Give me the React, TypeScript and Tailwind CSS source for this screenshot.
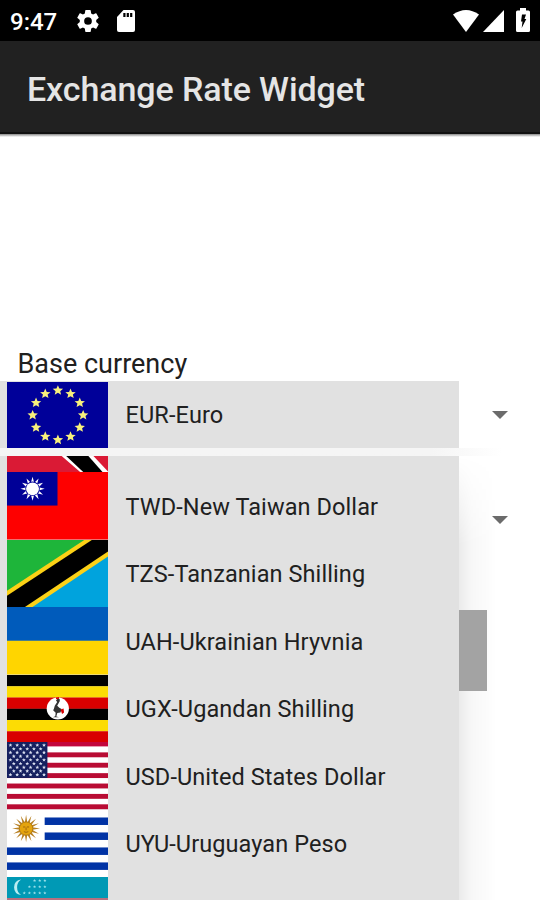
import React from "react";

const star = (cx: number, cy: number, r: number) =>
  Array.from({ length: 10 }, (_, i) => {
    const a = (i * Math.PI) / 5 - Math.PI / 2;
    const d = i % 2 ? r * 0.45 : r;
    return `${(cx + d * Math.cos(a)).toFixed(2)},${(cy + d * Math.sin(a)).toFixed(2)}`;
  }).join(" ");

const burst = (cx: number, cy: number, outer: number, inner: number, n: number) =>
  Array.from({ length: n * 2 }, (_, i) => {
    const a = (i * Math.PI) / n - Math.PI / 2;
    const d = i % 2 ? inner : outer;
    return `${(cx + d * Math.cos(a)).toFixed(2)},${(cy + d * Math.sin(a)).toFixed(2)}`;
  }).join(" ");

function Flag({ children }: { children: React.ReactNode }) {
  return (
    <svg viewBox="0 0 100 67.6" preserveAspectRatio="none" className="block h-full w-[101px] shrink-0">
      {children}
    </svg>
  );
}

const EU = () => (
  <Flag>
    <rect width="100" height="67.6" fill="#000099" />
    {Array.from({ length: 12 }, (_, i) => {
      const a = (i * Math.PI) / 6;
      return <polygon key={i} points={star(50.4 + 25 * Math.sin(a), 34 - 25.3 * Math.cos(a), 5.4)} fill="#f8f17c" />;
    })}
  </Flag>
);

const Trinidad = () => (
  <Flag>
    <rect width="100" height="67.6" fill="#da1a35" />
    <path d="M54 51H85.5L101 67.6H73Z" fill="#fff" />
    <path d="M58.5 51H80.5L95 67.6H76Z" fill="#000" />
  </Flag>
);

const Taiwan = () => (
  <Flag>
    <rect width="100" height="67.6" fill="#fe0000" />
    <rect width="50" height="33.6" fill="#000097" />
    <polygon points={burst(25.3, 16.8, 12, 6.3, 12)} fill="#fff" />
    <circle cx="25.3" cy="16.8" r="7.2" fill="#000097" />
    <circle cx="25.3" cy="16.8" r="6.4" fill="#fff" />
  </Flag>
);

const Tanzania = () => (
  <Flag>
    <rect width="100" height="67.6" fill="#00a3dd" />
    <path d="M0 0H100L0 67.6Z" fill="#1eb53a" />
    <path d="M0 50.8L76.5 0H100V16.5L24.5 67.6H0Z" fill="#fcd116" />
    <path d="M0 55.8L84 0H100V11.5L17 67.6H0Z" fill="#000" />
  </Flag>
);

const Ukraine = () => (
  <Flag>
    <rect width="100" height="34" fill="#005bbb" />
    <rect y="33.8" width="100" height="33.8" fill="#ffd500" />
  </Flag>
);

const Uganda = () => (
  <Flag>
    {["#000", "#fcdc04", "#d90000", "#000", "#fcdc04", "#d90000"].map((c, i) => (
      <rect key={i} y={i * 11.27} width="100" height="11.4" fill={c} />
    ))}
    <circle cx="50.3" cy="33.6" r="11" fill="#fff" />
    <path
      d="M48.5 25.5l2-2.2q2.300.2 1.700 3l-2.500 4.500q2 2.200 4.300 3.200l-1 3.500-3.200.5-1 3.500 2.700.8h-6l2.300-1 .4-3.600-2.500-2.500q.8-1 1.600-4.400l2.400-3.800z"
      fill="#333"
    />
    <path d="M48.5 22.5l3-.5v1.800l-3 .5zM53 34.5l3-1 .5 4-2 1.5z" fill="#d90000" />
  </Flag>
);

const USA = () => (
  <Flag>
    <rect width="100" height="67.6" fill="#fff" />
    {Array.from({ length: 7 }, (_, i) => (
      <rect
        key={i}
        y={i * 10.4}
        width="100"
        height={i === 0 ? 4.4 : 4.9}
        fill={i === 0 ? "#c3063c" : "#b90c34"}
      />
    ))}
    <rect width="40" height="36" fill="#15205f" />
    {Array.from({ length: 9 }, (_, r) =>
      Array.from({ length: r % 2 ? 5 : 6 }, (_, c) => (
        <polygon
          key={`${r}-${c}`}
          points={star(3.4 + c * 6.65 + (r % 2 ? 3.32 : 0), 3.2 + r * 3.7, 2)}
          fill="#d9dff0"
        />
      )),
    )}
  </Flag>
);

const Uruguay = () => (
  <Flag>
    <rect width="100" height="67.6" fill="#fff" />
    <rect x="37.3" y="7.5" width="62.7" height="7.5" fill="#0133a5" />
    <rect x="37.3" y="22.5" width="62.7" height="7.5" fill="#0133a5" />
    <rect y="37.5" width="100" height="7.5" fill="#0133a5" />
    <rect y="52.5" width="100" height="7.5" fill="#0133a5" />
    <polygon points={burst(18.9, 18.6, 13.8, 6.2, 16)} fill="#b98226" />
    <circle cx="18.9" cy="18.6" r="6.7" fill="#e5a40c" stroke="#a97410" strokeWidth=".8" />
    <path d="M15.9 17h2.2M19.7 17h2.2M18.9 17.5v2.8M16.7 21.7q2.2 1.3 4.4 0" fill="none" stroke="#9b6410" strokeWidth=".9" />
  </Flag>
);

const Uzbekistan = () => (
  <Flag>
    <rect width="100" height="67.6" fill="#1eb53a" />
    <rect y="21.5" width="100" height="24" fill="#fff" />
    <rect y="20.8" width="100" height="2.4" fill="#b7707f" />
    <rect width="100" height="21" fill="#0099b5" />
    <path d="M14 2.400q-7 1-7 7.800t7 7.800q-4-2.500-4-7.800t4-7.800z" fill="#b9edf2" />
    {[3, 4, 5].map((n, r) =>
      Array.from({ length: n }, (_, c) => (
        <polygon key={`${r}-${c}`} points={star(37.5 - c * 5.1, 3.6 + r * 6.2, 1.65)} fill="#9be0ea" />
      )),
    )}
  </Flag>
);

const currencies = [
  { label: "TWD-New Taiwan Dollar", Icon: Taiwan },
  { label: "TZS-Tanzanian Shilling", Icon: Tanzania },
  { label: "UAH-Ukrainian Hryvnia", Icon: Ukraine },
  { label: "UGX-Ugandan Shilling", Icon: Uganda },
  { label: "USD-United States Dollar", Icon: USA },
  { label: "UYU-Uruguayan Peso", Icon: Uruguay },
];

const Caret = () => (
  <svg viewBox="0 0 16 8" className="h-2 w-4">
    <path d="M0 0H16L8 8Z" fill="#6b6b6b" />
  </svg>
);

function StatusBar() {
  return (
    <div className="flex h-[41px] items-center bg-black pl-[10px] text-white">
      <span className="w-[67px] pt-[2px] text-[24px] leading-none font-medium">9:47</span>
      <svg viewBox="2 2 20 20" className="h-[22px] w-[22px]" fill="#fff">
        <path d="M19.43 12.98c.04-.32.07-.64.07-.98s-.03-.66-.07-.98l2.11-1.65a.5.5 0 0 0 .12-.64l-2-3.46a.5.5 0 0 0-.61-.22l-2.49 1a7.3 7.3 0 0 0-1.69-.98l-.38-2.65A.49.49 0 0 0 14 2h-4a.49.49 0 0 0-.49.42l-.38 2.65c-.61.25-1.17.59-1.69.98l-2.49-1a.49.49 0 0 0-.61.22l-2 3.46a.49.49 0 0 0 .12.64l2.11 1.65c-.04.32-.07.65-.07.98s.03.66.07.98l-2.11 1.65a.5.5 0 0 0-.12.64l2 3.46c.12.22.39.3.61.22l2.49-1c.52.4 1.08.73 1.69.98l.38 2.65c.03.24.24.42.49.42h4c.25 0 .46-.18.49-.42l.38-2.65c.61-.25 1.17-.59 1.69-.98l2.49 1c.23.09.49 0 .61-.22l2-3.46a.5.5 0 0 0-.12-.64zM12 15.5a3.5 3.5 0 1 1 0-7 3.5 3.5 0 0 1 0 7z" />
      </svg>
      <svg viewBox="0 0 18 22" className="ml-[18px] h-[22px] w-[18px]">
        <path d="M6.5 0H16q2 0 2 2V20q0 2-2 2H2q-2 0-2-2V7Z" fill="#fff" />
        <path d="M6.3 3h2.2v4H6.3zM9.7 3h2.2v4H9.7zM13.1 3h2.2v4h-2.2z" fill="#000" />
      </svg>
      <div className="ml-auto flex items-center pr-[10px]">
        <svg viewBox="0 0 26 22" className="h-[22px] w-[26px]">
          <path d="M0 4.5Q13-4.5 26 4.5L13 22Z" fill="#fff" />
        </svg>
        <svg viewBox="0 0 21 22" className="ml-[4px] h-[22px] w-[21px]">
          <path d="M21 0V22H0Z" fill="#fff" />
        </svg>
        <svg viewBox="0 0 14 24" className="mb-[2px] ml-[12px] h-[24px] w-[14px]">
          <path d="M4 0h6v2.5h2.5q1.5 0 1.5 1.5v18.5q0 1.5-1.5 1.5h-11q-1.5 0-1.5-1.5V4q0-1.5 1.5-1.5H4Z" fill="#fff" />
          <path d="M6 6.5H10L8.5 11H10.3L5.7 20L6.5 13.5H5Z" fill="#000" />
        </svg>
      </div>
    </div>
  );
}

export default function App() {
  return (
    <div className="relative flex h-[900px] w-[540px] flex-col overflow-hidden bg-white font-[Roboto,sans-serif] text-[#202020]">
      <StatusBar />
      <header className="flex h-[93px] items-center border-b-2 border-[#111] bg-[#212121] pl-[27px]">
        <h1 className="pt-[4px] text-[34px] leading-[40px] font-medium tracking-[-0.1px] whitespace-nowrap text-[#e5e5e5]">
          Exchange Rate Widget
        </h1>
      </header>
      <div className="h-[3px] shrink-0 bg-linear-to-b from-[#888] to-white" />
      <main className="flex flex-1 flex-col pt-[212px]">
        <label className="h-[31px] pl-[17.5px] text-[27px] leading-[31px] whitespace-nowrap">
          Base currency
        </label>
        <div className="flex h-[68px] items-center">
          <div className="flex h-[67px] w-[459px] items-center bg-[#e1e1e1] pt-px pl-[7px]">
            <EU />
            <span className="pt-[3px] pl-[17.5px] text-[23.5px] tracking-[0.13px] whitespace-nowrap">EUR-Euro</span>
          </div>
          <div className="pt-[2px] pl-[33px]">
            <Caret />
          </div>
        </div>
        <div className="h-2 bg-linear-to-r from-[#f5f5f5] from-80% to-white to-93%" />
        <div className="flex h-[127px] items-center pl-[492px]">
          <Caret />
        </div>
      </main>

      <div className="absolute top-[456px] left-0 flex h-[444px]">
        <div className="flex w-[459px] flex-col overflow-hidden bg-[#e1e1e1]">
          <div className="flex h-4 shrink-0 items-end overflow-hidden pl-[7px]">
            <div className="h-[67.5px] shrink-0">
              <Trinidad />
            </div>
          </div>
          {currencies.map(({ label, Icon }) => (
            <div key={label} className="flex h-[67.5px] shrink-0 items-center pl-[7px]">
              <Icon />
              <span className="pt-[3px] pl-[17.5px] text-[23.5px] tracking-[0.09px] whitespace-nowrap">{label}</span>
            </div>
          ))}
          <div className="flex h-[67.5px] shrink-0 pl-[7px]">
            <Uzbekistan />
          </div>
        </div>
        <div className="w-[38px] bg-linear-to-r from-black/8 via-black/3 via-35% to-transparent mask-t-from-80% mask-t-to-100% pt-[154px]">
          <div className="h-[81px] w-7 bg-[#a3a3a3]" />
        </div>
      </div>
    </div>
  );
}
